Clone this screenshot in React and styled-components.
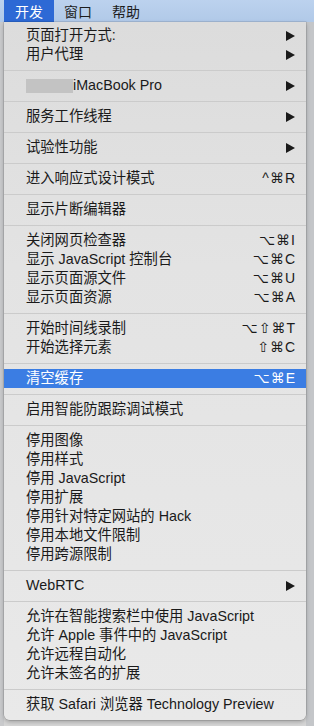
import React from 'react';
import styled, { createGlobalStyle } from 'styled-components';

const GlobalStyle = createGlobalStyle`
	html, body {
		margin: 0;
		padding: 0;
	}
	body {
		width: 314px;
		height: 726px;
		overflow: hidden;
		background: #d4d5d7;
		font-family: "Liberation Sans", "Noto Sans CJK SC", sans-serif;
		-webkit-font-smoothing: antialiased;
	}
`;

const Screen = styled.div`
	display: flex;
	flex-direction: column;
	width: 314px;
	height: 726px;
	background: linear-gradient(90deg, #c9cacc 0, #c9cacc 4px, transparent 4px, transparent 306px, #c4c6c9 306px),
		linear-gradient(180deg, #e9eef6 0, #e9eef6 40px, #cfd0d2 40px, #dcdcdc 75px, #e4e4e4 430px, #bdbdbd 545px, #d6d6d6 560px);
`;

const MenuBar = styled.div`
	display: flex;
	align-items: stretch;
	height: 22px;
	padding-left: 4px;
	background: linear-gradient(180deg, #bcd2ee, #b1c9e8);
	font-family: "Noto Sans CJK SC", sans-serif;
	font-size: 14px;
	color: #1d1d1d;
`;

const BarItem = styled.div`
	display: flex;
	align-items: center;
	padding: 0 ${p => (p.$active ? '11px' : '10px')};
	background: ${p => (p.$active ? '#2d69d5' : 'transparent')};
	color: ${p => (p.$active ? '#ffffff' : '#1d1d1d')};
	line-height: 1;
`;

const Desktop = styled.div`
	flex: 1;
	display: flex;
	padding-left: 4px;
`;

const Menu = styled.div`
	width: 302px;
	height: 698px;
	box-sizing: border-box;
	padding: 4px 0;
	background: linear-gradient(180deg, #dcdcdc 0%, #e3e3e3 35%, #e9e9e9 100%);
	border-radius: 0 0 6px 6px;
	box-shadow: 0 2px 4px rgba(0, 0, 0, 0.25), 0 0 0 0.5px rgba(0, 0, 0, 0.18);
	display: flex;
	flex-direction: column;
`;

const Row = styled.div`
	display: flex;
	align-items: center;
	justify-content: space-between;
	height: 19px;
	padding: 0 10px 0 22px;
	background: ${p => (p.$active ? '#3b7de3' : 'transparent')};
	color: ${p => (p.$active ? '#ffffff' : '#1a1a1a')};
	font-size: 14.3px;
	line-height: 19px;
	white-space: nowrap;
`;

const Label = styled.span`
	display: flex;
	align-items: center;
`;

const Blur = styled.span`
	display: inline-block;
	width: 47px;
	height: 14px;
	background: #c3c3c3;
`;

const Shortcut = styled.span`
	font-family: "Liberation Sans", "DejaVu Sans", sans-serif;
	font-size: 14px;
	letter-spacing: 1px;
`;

const Separator = styled.div`
	height: 12px;
	display: flex;
	align-items: center;
	&::after {
		content: '';
		flex: 1;
		height: 1px;
		background: #cbcbcb;
	}
`;

const Arrow = () => (
	<svg width="9" height="10" viewBox="0 0 9 10" style={{ marginRight: 1 }}>
		<path d="M0 0 L9 5 L0 10 Z" fill="#1a1a1a" />
	</svg>
);

const items = [
	{ label: '页面打开方式:', sub: true },
	{ label: '用户代理', sub: true },
	'sep',
	{ label: 'iMacBook Pro', sub: true, blur: true },
	'sep',
	{ label: '服务工作线程', sub: true },
	'sep',
	{ label: '试验性功能', sub: true },
	'sep',
	{ label: '进入响应式设计模式', key: '^⌘R' },
	'sep',
	{ label: '显示片断编辑器' },
	'sep',
	{ label: '关闭网页检查器', key: '⌥⌘I' },
	{ label: '显示 JavaScript 控制台', key: '⌥⌘C' },
	{ label: '显示页面源文件', key: '⌥⌘U' },
	{ label: '显示页面资源', key: '⌥⌘A' },
	'sep',
	{ label: '开始时间线录制', key: '⌥⇧⌘T' },
	{ label: '开始选择元素', key: '⇧⌘C' },
	'sep',
	{ label: '清空缓存', key: '⌥⌘E', active: true },
	'sep',
	{ label: '启用智能防跟踪调试模式' },
	'sep',
	{ label: '停用图像' },
	{ label: '停用样式' },
	{ label: '停用 JavaScript' },
	{ label: '停用扩展' },
	{ label: '停用针对特定网站的 Hack' },
	{ label: '停用本地文件限制' },
	{ label: '停用跨源限制' },
	'sep',
	{ label: 'WebRTC', sub: true },
	'sep',
	{ label: '允许在智能搜索栏中使用 JavaScript' },
	{ label: '允许 Apple 事件中的 JavaScript' },
	{ label: '允许远程自动化' },
	{ label: '允许未签名的扩展' },
	'sep',
	{ label: '获取 Safari 浏览器 Technology Preview' },
];

const App = () => {
	return (
		<Screen>
			<GlobalStyle />
			<MenuBar>
				<BarItem $active>开发</BarItem>
				<BarItem>窗口</BarItem>
				<BarItem>帮助</BarItem>
			</MenuBar>
			<Desktop>
				<Menu>
					{items.map((it, i) =>
						it === 'sep' ? (
							<Separator key={i} />
						) : (
							<Row key={i} $active={it.active}>
								<Label>
									{it.blur && <Blur />}
									{it.label}
								</Label>
								{it.key && <Shortcut>{it.key}</Shortcut>}
								{it.sub && <Arrow />}
							</Row>
						)
					)}
				</Menu>
			</Desktop>
		</Screen>
	);
};

export default App;
